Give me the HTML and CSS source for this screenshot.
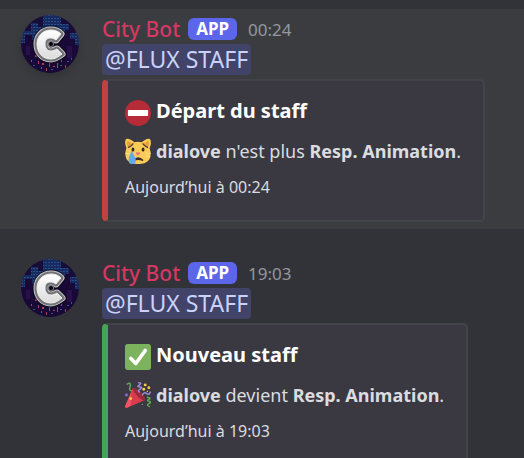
FILE: index.html
```html
<!DOCTYPE html>
<html lang="fr">
<head>
  <meta charset="UTF-8" />
  <meta name="viewport" content="width=device-width, initial-scale=1.0" />
  <title>City Bot</title>
  <link rel="stylesheet" href="styles.css">
</head>
<body>
  <svg class="defs" aria-hidden="true">
    <defs>
      <clipPath id="round"><circle cx="29" cy="29" r="29" /></clipPath>
      <pattern id="windows" width="3" height="3" patternUnits="userSpaceOnUse">
        <rect width="3" height="3" fill="#182a60" />
        <rect width="2" height="1" fill="#265088" />
      </pattern>
      <linearGradient id="silver" x1="0" y1="0" x2="0" y2="1">
        <stop offset="0" stop-color="#ffffff" />
        <stop offset="1" stop-color="#dcdcdc" />
      </linearGradient>
      <path id="letter" d="M40 19 C37 16 34 15 30 15 C21 15 16 22 16 29 C16 37 21 44 30 44 C34 44 37 42 41 39 L36 34 C34 35 32 36 30 36 C26 36 24 33 24 29 C24 25 26 23 30 23 C32 23 33 24 35 25 Z" />
      <symbol id="avatar" viewBox="0 0 58 58">
        <g clip-path="url(#round)">
          <rect width="58" height="58" fill="#180c38" />
          <path d="M0 16 H10 V8 H17 V12 H22 V0 H40 V9 H48 V18 H58 V32 H0 Z" fill="url(#windows)" />
          <path d="M0 28 H4 V20 H11 V25 H16 V17 H22 V26 H37 V20 H44 V15 H49 V24 H54 V30 H58 V58 H0 Z" fill="#190936" />
          <path d="M46 31 H51 V43 H46 Z M5 31 H9 V40 H5 Z" fill="#291148" />
          <path d="M14 40h2v2h-2zM17 46h1v3h-1zM21 48h2v2h-2zM25 53h1v3h-1zM28 48h1v4h-1zM32 51h2v1h-2zM36 48h1v5h-1zM40 45h1v2h-1zM44 50h1v3h-1zM20 52h1v2h-1zM10 45h1v2h-1z" fill="#a34355" />
          <path d="M12 50h2v1h-2zM24 46h2v1h-2zM30 54h2v1h-2zM39 50h2v1h-2zM46 46h2v1h-2zM50 43h1v2h-1z" fill="#3a5391" />
        </g>
        <use href="#letter" fill="none" stroke="#08050f" stroke-width="9" stroke-linejoin="round" opacity="0.6" />
        <use href="#letter" fill="#c4c4c6" stroke="#c4c4c6" stroke-width="7" stroke-linejoin="round" />
        <use href="#letter" fill="#737377" stroke="#737377" stroke-width="5" stroke-linejoin="round" />
        <use href="#letter" fill="url(#silver)" stroke="#eeeeee" stroke-width="1" stroke-linejoin="round" />
        <circle cx="30" cy="29" r="3" fill="#77777b" />
        <circle cx="30" cy="29" r="2" fill="#08050f" />
      </symbol>
    </defs>
  </svg>

  <main class="chat">
    <article class="message highlighted">
      <svg class="avatar" role="img" aria-label="City Bot"><use href="#avatar" /></svg>
      <div class="body">
        <header class="meta">
          <span class="author">City Bot</span>
          <span class="tag">APP</span>
          <time class="time">00:24</time>
        </header>
        <div class="content"><span class="mention">@FLUX STAFF</span></div>
        <section class="embed red">
          <h2 class="title">
            <svg class="emoji" viewBox="0 0 36 36" aria-hidden="true">
              <circle cx="18" cy="18" r="18" fill="#b52b37" />
              <rect x="4" y="14" width="28" height="8" rx="1" fill="#fff" />
            </svg>
            <span>Départ du staff</span>
          </h2>
          <p class="description">
            <svg class="emoji" viewBox="0 0 36 36" aria-hidden="true">
              <path d="M1 2 C3 -1 11 4 13 6 C16 5 20 5 23 6 C26 3 33 -1 35 2 C37 6 35 12 34 14 C36 20 36 25 34 29 C31 34 25 36 18 36 C11 36 5 34 2 29 C0 25 0 20 2 14 C1 11 -1 6 1 2 Z" fill="#fbcb57" />
              <path d="M3 4 C6 4 8 6 10 8 L4 13 C3 10 2 7 3 4 Z M33 4 C30 4 28 6 26 8 L32 13 C33 10 34 7 33 4 Z" fill="#e8a13f" />
              <path d="M5 13 Q9 11 11 8 M31 13 Q27 11 25 8" fill="none" stroke="#574033" stroke-width="2" stroke-linecap="round" />
              <ellipse cx="11" cy="16" rx="2" ry="3" fill="#332b2b" />
              <ellipse cx="25" cy="16" rx="2" ry="3" fill="#332b2b" />
              <path d="M15 20 H21 Q21 23 18 24 Q15 23 15 20 Z" fill="#ea6b80" />
              <path d="M12 31 Q18 24 25 31 Q18 28 12 31 Z" fill="#40302d" stroke="#40302d" stroke-width="2" />
              <path d="M0 21 L7 22 M29 22 L36 21 M29 25 L35 26" stroke="#fce5a5" stroke-width="1" />
              <path d="M9 18 C12 23 15 27 15 31 C15 38 5 38 5 31 C5 27 7 23 9 18 Z" fill="#63a9ed" />
            </svg>
            <span><strong>dialove</strong> n'est plus <strong>Resp. Animation</strong>.</span>
          </p>
          <footer class="footer">Aujourd’hui à 00:24</footer>
        </section>
      </div>
    </article>

    <article class="message">
      <svg class="avatar" role="img" aria-label="City Bot"><use href="#avatar" /></svg>
      <div class="body">
        <header class="meta">
          <span class="author">City Bot</span>
          <span class="tag">APP</span>
          <time class="time">19:03</time>
        </header>
        <div class="content"><span class="mention">@FLUX STAFF</span></div>
        <section class="embed green">
          <h2 class="title">
            <svg class="emoji" viewBox="0 0 36 36" aria-hidden="true">
              <rect width="36" height="36" rx="4" fill="#7eb35e" />
              <path d="M8 20 L15 27 L28 9" fill="none" stroke="#fff" stroke-width="5" stroke-linecap="round" stroke-linejoin="round" />
            </svg>
            <span>Nouveau staff</span>
          </h2>
          <p class="description">
            <svg class="emoji" viewBox="0 0 36 36" aria-hidden="true">
              <path d="M11 8 L0 34 Q0 36 2 36 L28 25 Z" fill="#d83b4c" />
              <path d="M9 13 L0 34 Q0 36 2 36 L8 33 Z" fill="#ee5367" />
              <path d="M11 8 C15 7 29 19 28 25 C25 29 9 13 11 8 Z" fill="#972b3b" />
              <path d="M3 3 Q9 -1 7 7 Q5 12 9 12" fill="none" stroke="#66a755" stroke-width="2" stroke-linecap="round" />
              <path d="M19 1 Q24 1 20 4 Q15 7 21 7 Q25 7 21 10 Q17 12 20 14 M24 18 Q27 13 30 16 Q33 19 35 14" fill="none" stroke="#a28ae2" stroke-width="2" stroke-linecap="round" />
              <path d="M31 21 Q37 22 33 24 Q29 26 34 27 Q37 28 33 30 Q29 32 34 34" fill="none" stroke="#66a755" stroke-width="2" stroke-linecap="round" />
              <g fill="#f8c947">
                <circle cx="28" cy="4" r="2" /><circle cx="33" cy="8" r="2" /><circle cx="26" cy="10" r="2" /><circle cx="31" cy="13" r="1" /><circle cx="8" cy="23" r="2" />
              </g>
              <circle cx="2" cy="18" r="2" fill="#8d6bd8" />
              <circle cx="24" cy="31" r="1" fill="#66a755" />
            </svg>
            <span><strong>dialove</strong> devient <strong>Resp. Animation</strong>.</span>
          </p>
          <footer class="footer">Aujourd’hui à 19:03</footer>
        </section>
      </div>
    </article>
  </main>
</body>
</html>
```
FILE: styles.css
```css
* { box-sizing: border-box; }
html { background: #323338; }
body { margin: 0; font-family: "Noto Sans", sans-serif; color: #dbdce0; background: #323338; height: 100vh; overflow: hidden; }
.defs { position: absolute; width: 0; height: 0; }
.chat { display: flex; flex-direction: column; gap: 24px; padding-top: 9px; }
.message { display: flex; align-items: flex-start; gap: 23px; padding: 6px 21px 7px; }
.highlighted { background: #3b3c40; }
.avatar { width: 58px; height: 58px; flex: none; border-radius: 50%; }
.highlighted .avatar { box-shadow: 0 4px 8px rgba(0,0,0,0.16); }
.body { flex: 1; min-width: 0; }
.meta { display: flex; align-items: center; gap: 8px; height: 28px; margin-bottom: 1px; white-space: nowrap; }
.author { font-size: 21px; line-height: 28px; font-weight: 500; color: #d63864; }
.tag { padding: 0 8px; border-radius: 6px; background: #5b66ea; color: #fff; font-size: 17px; line-height: 22px; font-weight: 700; }
.time { margin-left: 3px; font-size: 17px; color: #96979d; }
.content { display: flex; margin-bottom: 4px; }
.mention { padding: 0 3px; border-radius: 4px; background: #414369; color: #cbd2fa; font-size: 23px; line-height: 31px; white-space: nowrap; }
.embed { width: fit-content; padding: 15px 22px 22px 17px; border: 2px solid #434449; border-left-width: 6px; border-radius: 5px; background: #3a3942; white-space: nowrap; }
.red { border-left-color: #be423d; }
.green { border-left-color: #46a35a; }
.title, .description { display: flex; align-items: center; gap: 5px; margin: 0; }
.title { font-size: 20px; line-height: 30px; font-weight: 700; color: #fff; }
.title .emoji { align-self: flex-end; }
.description { margin-top: 11px; font-size: 18px; line-height: 28px; }
.emoji { width: 26px; height: 26px; flex: none; }
.footer { margin-top: 11px; font-size: 16px; line-height: 22px; }
```
